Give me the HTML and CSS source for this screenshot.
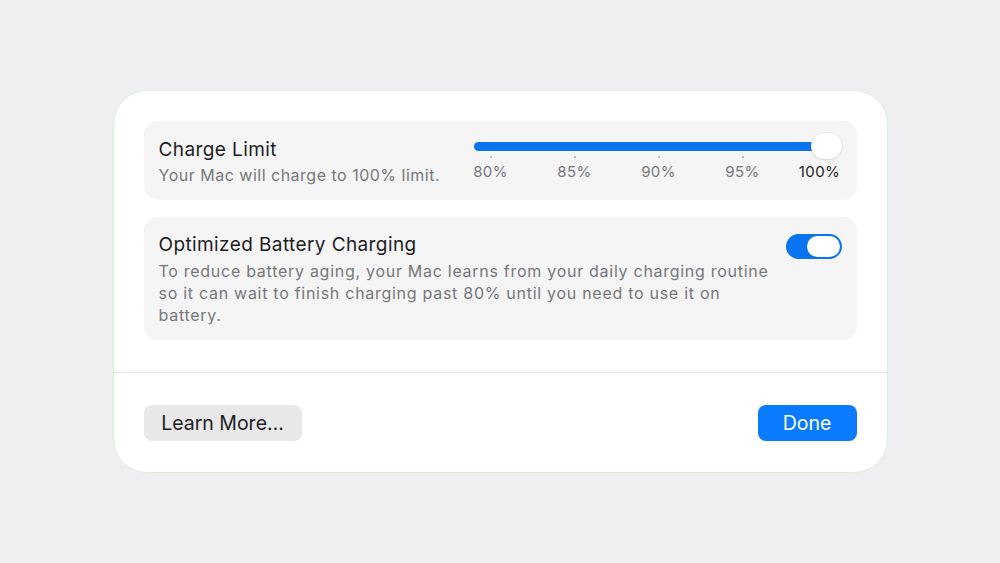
FILE: index.html
```html
<!DOCTYPE html>
<html>
<head>
<meta charset="utf-8">
<link rel="stylesheet" href="styles.css">
</head>
<body>
<div class="dialog">
  <div class="content">
    <div class="row row-limit">
      <div class="text">
        <div class="title">Charge Limit</div>
        <div class="sub">Your Mac will charge to 100% limit.</div>
      </div>
      <div class="slider">
        <div class="track-wrap">
          <div class="track"></div>
          <div class="knob"></div>
        </div>
        <div class="labels">
          <span class="stop"><i class="tick"></i>80%</span>
          <span class="stop"><i class="tick"></i>85%</span>
          <span class="stop"><i class="tick"></i>90%</span>
          <span class="stop"><i class="tick"></i>95%</span>
          <span class="stop last cur"><i class="tick hidden"></i>100%</span>
        </div>
      </div>
    </div>
    <div class="row row-opt">
      <div class="text">
        <div class="title">Optimized Battery Charging</div>
        <div class="desc">To reduce battery aging, your Mac learns from your daily charging routine so it can wait to finish charging past 80% until you need to use it on battery.</div>
      </div>
      <div class="toggle"><div class="toggle-knob"></div></div>
    </div>
  </div>
  <div class="footer">
    <button class="btn btn-secondary">Learn More…</button>
    <button class="btn btn-primary">Done</button>
  </div>
</div>
</body>
</html>
```
FILE: styles.css
```css
html, body {
  margin: 0;
  height: 100%;
}
body {
  background: #efeff1;
  font-family: Inter, "Helvetica Neue", "Liberation Sans", sans-serif;
  display: flex;
  justify-content: center;
  padding-top: 90px;
  box-sizing: border-box;
}
.dialog {
  width: 775px;
  height: 383px;
  box-sizing: border-box;
  background: #ffffff;
  border: 1px solid #d9efd6;
  border-radius: 34px;
  display: flex;
  flex-direction: column;
}
.content {
  padding: 30px 30px 32px 30px;
  display: flex;
  flex-direction: column;
  gap: 17px;
  border-bottom: 1px solid #e4e6e4;
}
.row {
  background: #f5f5f5;
  border-radius: 14px;
  display: flex;
  padding: 0 15px;
}
.row-limit {
  height: 79px;
  align-items: flex-start;
  justify-content: space-between;
}
.row-limit .text {
  padding-top: 18px;
}
.title {
  font-size: 19px;
  color: #1d1d1f;
  letter-spacing: 0.4px;
  line-height: 22px;
}
.sub {
  font-size: 16px;
  color: #77777c;
  line-height: 20px;
  margin-top: 4px;
  letter-spacing: 0.5px;
}
.slider {
  width: 368px;
  flex-shrink: 0;
  padding-top: 12px;
  display: flex;
  flex-direction: column;
}
.track-wrap {
  position: relative;
  height: 26px;
  display: flex;
  align-items: center;
}
.track {
  width: 352px;
  height: 9px;
  border-radius: 5px;
  background: #0a74f0;
}
.knob {
  position: absolute;
  right: 0;
  top: 0;
  width: 31px;
  height: 26px;
  border-radius: 13px;
  background: #ffffff;
  box-shadow: 0 0.5px 2px rgba(0,0,0,0.18), 0 0 0 0.5px rgba(0,0,0,0.04);
}
.labels {
  display: flex;
  margin-top: -3px;
  margin-left: -25px;
  font-size: 15px;
  color: #77777c;
  letter-spacing: 0.4px;
  line-height: 18px;
}
.stop {
  width: 84px;
  flex-shrink: 0;
  display: flex;
  flex-direction: column;
  align-items: center;
}
.stop.last {
  width: 70px;
}
.tick {
  display: block;
  width: 2px;
  height: 2px;
  border-radius: 1px;
  background: #a8a8ad;
  margin-bottom: 5px;
}
.tick.hidden { background: transparent; }
.labels .cur {
  color: #1d1d1f;
}
.row-opt {
  height: 123px;
  align-items: flex-start;
  justify-content: space-between;
}
.row-opt .text {
  padding-top: 17px;
  width: 620px;
}
.desc {
  font-size: 16px;
  color: #77777c;
  line-height: 22px;
  margin-top: 4px;
  letter-spacing: 0.72px;
  width: 616px;
}
.toggle {
  margin-top: 17px;
  width: 56px;
  height: 25px;
  border-radius: 13px;
  background: #0a74f0;
  box-sizing: border-box;
  padding: 2px 2px 2px 21px;
}
.toggle-knob {
  width: 33px;
  height: 21px;
  border-radius: 11px;
  background: #ffffff;
}
.footer {
  flex: 1;
  display: flex;
  justify-content: space-between;
  align-items: flex-start;
  padding: 32px 30px 0 30px;
}
.btn {
  font-family: inherit;
  font-size: 19.5px;
  height: 36px;
  border: none;
  border-radius: 8px;
  padding: 0;
  letter-spacing: 0;
}
.btn-secondary {
  width: 158px;
  background: #e8e8e9;
  color: #1d1d1f;
}
.btn-primary {
  width: 99px;
  background: #0a7aff;
  color: #ffffff;
}
```
